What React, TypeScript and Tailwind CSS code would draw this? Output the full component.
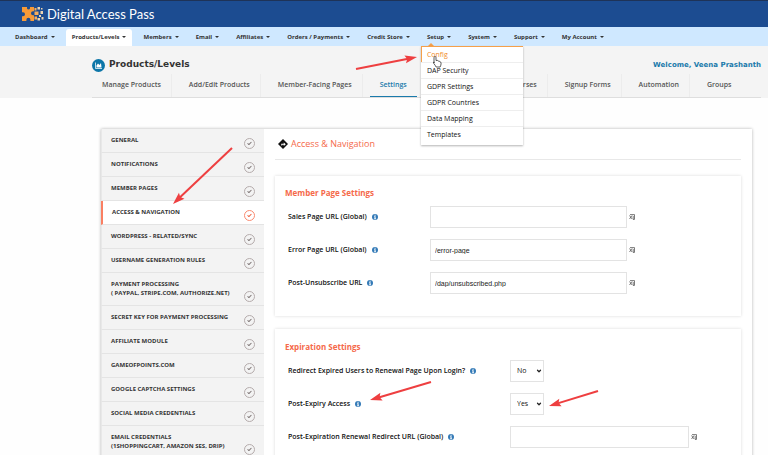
import { useState } from "react";
import { Check, ChevronDown } from "lucide-react";

const navBefore = ["Members", "Email", "Affiliates", "Orders / Payments", "Credit Store"];
const navAfter = ["System", "Support", "My Account"];
const setupItems = ["DAP Security", "GDPR Settings", "GDPR Countries", "Data Mapping", "Templates"];

const sections = [
  ["GENERAL"],
  ["NOTIFICATIONS"],
  ["MEMBER PAGES"],
  ["ACCESS & NAVIGATION"],
  ["WORDPRESS - RELATED/SYNC"],
  ["USERNAME GENERATION RULES"],
  ["PAYMENT PROCESSING", "( PAYPAL, STRIPE.COM, AUTHORIZE.NET)"],
  ["SECRET KEY FOR PAYMENT PROCESSING"],
  ["AFFILIATE MODULE"],
  ["GAMEOFPOINTS.COM"],
  ["GOOGLE CAPTCHA SETTINGS"],
  ["SOCIAL MEDIA CREDENTIALS"],
  ["EMAIL CREDENTIALS", "(1SHOPPINGCART, AMAZON SES, DRIP)"],
];

function Logo() {
  return (
    <svg width="22" height="14" viewBox="0 0 22 14" aria-hidden="true">
      <path
        fill="#f79a38"
        d="M0 0h5v1.5a1.6 1.6 0 0 0 3 0V0h4v4.2h-1a1.8 1.8 0 0 0 0 4H12V14H8.4v-1.2a2 2 0 0 0-4 0V14H0V9.2h1a2 2 0 0 0 0-4H0z"
      />
      <path fill="#f8ad5c" d="M12.500 1h2v2.500h-2zM12.500 4.500h4v3.500h-4zM12.500 9.500h2.500v3h-2.500z" />
      <path
        fill="#ecd3b0"
        d="M15.500 0h2.500v2.500h-2.500zM18.500 4h2.500v3h-2.500zM17 8h2v2H17zM15.500 11h2.500v2.500h-2.500zM19.500 10h2v2.500h-2zM19 1h1.500v1.500H19z"
      />
    </svg>
  );
}

function Caret() {
  return <span className="ml-[3px] inline-block border-x-2 border-t-2 border-x-transparent border-t-[#333] align-middle" />;
}

function NavItem({ label, active = false }: { label: string; active?: boolean }) {
  return (
    <button
      className={
        active
          ? "h-[17px] rounded-t-[3px] bg-white px-[6px] whitespace-nowrap"
          : "h-[17px] px-[6px] whitespace-nowrap"
      }
    >
      {label}
      <Caret />
    </button>
  );
}

function SetupMenu() {
  return (
    <div className="relative">
      <NavItem label="Setup" />
      <span className="absolute bottom-0 left-[7px] border-x-[3px] border-b-[3px] border-x-transparent border-b-[#f5a04a]" />
      <ul className="absolute top-full left-0 z-10 w-[102px] border-t border-[#f5a04a] bg-white pb-[3px] text-[7px] leading-[15px] font-normal text-[#111] shadow-[0_1px_2px_rgba(0,0,0,0.3)]">
        <li className="border-b border-b-[#eee]">
          <a href="#config" className="block border-l border-[#f5a04a] pl-[5px] font-medium text-[#f08a28]">
            Config
          </a>
        </li>
        {setupItems.map((item) => (
          <li key={item} className="border-b border-[#eee] last:border-b-0">
            <a href="#setup" className="block pl-[6px]">
              {item}
            </a>
          </li>
        ))}
      </ul>
    </div>
  );
}

function TabItem({ label }: { label: string }) {
  return (
    <a href="#tab" className="border-r border-[#ececec] px-[10px] whitespace-nowrap last:border-r-0">
      {label}
    </a>
  );
}

function InfoIcon() {
  return (
    <svg width="6" height="6" viewBox="0 0 12 12" className="shrink-0" aria-hidden="true">
      <circle cx="6" cy="6" r="6" fill="#337ab7" />
      <path d="M5 1.500h2.200v2H5zM4.200 4.700h3V9h.8v1.400H4.200V9H5V6h-.8z" fill="#fff" />
    </svg>
  );
}

function ExpandIcon() {
  return (
    <svg width="6" height="6" viewBox="0 0 6 6" className="shrink-0" fill="none" stroke="#444" strokeWidth="0.700" aria-hidden="true">
      <path d="M.5 1.500l2.600 3.500M3.100 1.500L.5 5M1 .6h4.500v4.800H4M4.200 2v3.400" />
    </svg>
  );
}

function SidebarItem({ lines, active, onSelect }: { lines: string[]; active: boolean; onSelect: () => void }) {
  return (
    <button
      onClick={onSelect}
      className={
        active
          ? "flex w-full items-end justify-between border-b border-l-2 border-b-[#e4e4e4] border-l-[#fa7f62] bg-white pr-[9px] pl-[9px] text-left"
          : "flex w-full items-end justify-between border-b border-l border-b-[#e4e4e4] border-l-[#e8e8e8] bg-[#f3f3f3] pr-[9px] pl-[9px] text-left"
      }
    >
      <span className="py-[7px] whitespace-nowrap">
        {lines.map((line) => (
          <span key={line} className="block">
            {line}
          </span>
        ))}
      </span>
      <span
        className={
          active
            ? "mb-[3px] flex size-[11px] shrink-0 items-center justify-center rounded-full border border-[#fa8a70] text-[#f0603f]"
            : "mb-[3px] flex size-[11px] shrink-0 items-center justify-center rounded-full border border-[#b5acac] text-[#7d7474]"
        }
      >
        <Check size={5} strokeWidth={5} />
      </span>
    </button>
  );
}

function FieldLabel({ id, text }: { id: string; text: string }) {
  return (
    <div className="flex items-center gap-[5px]">
      <label htmlFor={id} className="whitespace-nowrap">
        {text}
      </label>
      <InfoIcon />
    </div>
  );
}

function UrlField({ id, label, value = "" }: { id: string; label: string; value?: string }) {
  return (
    <div className="grid h-[22px] grid-cols-[142px_1fr] items-center">
      <FieldLabel id={id} text={label} />
      <div className="flex items-center gap-[2px]">
        <input
          id={id}
          defaultValue={value}
          className="h-[22px] w-full max-w-[197px] border border-[#e3e3e3] bg-white px-1 font-['Liberation_Sans',sans-serif] text-[7px] font-normal text-[#222]"
        />
        <ExpandIcon />
      </div>
    </div>
  );
}

function SelectField({ id, label, value }: { id: string; label: string; value: string }) {
  return (
    <div className="grid h-[22px] grid-cols-[222px_1fr] items-center">
      <FieldLabel id={id} text={label} />
      <div className="relative w-[34px]">
        <select
          id={id}
          defaultValue={value}
          className="block h-[22px] w-full appearance-none border border-[#e3e3e3] bg-white pl-[6px] text-[7px] font-normal text-[#111]"
        >
          <option>Yes</option>
          <option>No</option>
        </select>
        <ChevronDown size={6} strokeWidth={5} className="pointer-events-none absolute top-2 right-[2px] text-[#222]" />
      </div>
    </div>
  );
}

function Arrow({ from, to }: { from: [number, number]; to: [number, number] }) {
  const angle = (Math.atan2(to[1] - from[1], to[0] - from[0]) * 180) / Math.PI;
  const length = Math.hypot(to[0] - from[0], to[1] - from[1]);
  return (
    <g transform={`translate(${from[0]} ${from[1]}) rotate(${angle})`} fill="#ee3f40">
      <path d={`M0-1H${length - 9}V1H0z`} />
      <path d={`M${length} 0L${length - 12}-4L${length - 10} 0L${length - 12} 4z`} />
    </g>
  );
}

export default function App() {
  const [selected, setSelected] = useState(3);

  return (
    <div className="relative h-screen overflow-hidden bg-[#fefefe] font-['Open_Sans',sans-serif]">
      <header className="flex h-[27px] items-center gap-[3px] border-t border-[#1e3358] bg-[#1c4c91] pl-[22px]">
        <Logo />
        <span className="font-['Lato',sans-serif] text-[13px] leading-none text-white">Digital Access Pass</span>
      </header>

      <nav className="flex h-[19px] items-end gap-[5px] bg-[#cfe8ff] pl-[9px] text-[6px] font-bold text-[#333]">
        <NavItem label="Dashboard" />
        <NavItem label="Products/Levels" active />
        {navBefore.map((label) => (
          <NavItem key={label} label={label} />
        ))}
        <SetupMenu />
        {navAfter.map((label) => (
          <NavItem key={label} label={label} />
        ))}
      </nav>

      <div className="bg-[#f4f4f4] pt-[10px] pr-[7px] pl-[92px]">
        <div className="flex h-[18px] items-center justify-between font-['DejaVu_Sans',sans-serif] font-bold">
          <h1 className="flex items-center gap-1 text-[9px] text-[#333]">
            <svg width="13" height="13" viewBox="0 0 26 26" aria-hidden="true">
              <circle cx="13" cy="13" r="13" fill="#0c76a8" />
              <path d="M7 7v12h13" fill="none" stroke="#fff" strokeWidth="1.500" />
              <path d="M9 17v-4l3-4 3 3 3-4 1 9z" fill="#fff" />
            </svg>
            Products/Levels
          </h1>
          <span className="text-[7px] text-[#1a7aab]">Welcome, Veena Prashanth</span>
        </div>
        <div className="flex h-[24px] gap-[7px] border-b border-[#dedede] text-[7px] leading-[22px] font-semibold text-[#555]">
          <TabItem label="Manage Products" />
          <TabItem label="Add/Edit Products" />
          <TabItem label="Member-Facing Pages" />
          <a href="#settings" className="border-b border-[#1a7aab] px-[10px] text-[#1a7aab]">
            Settings
          </a>
          <a href="#courses" className="w-[124px] border-r border-[#ececec] pr-[10px] text-right">
            Courses
          </a>
          <TabItem label="Signup Forms" />
          <TabItem label="Automation" />
          <TabItem label="Groups" />
        </div>
      </div>

      <div className="mt-[31px] mr-4 ml-[101px] flex bg-white shadow-[0_0_3px_rgba(0,0,0,0.3)]">
        <aside className="w-[163px] shrink-0 text-[6px] leading-[9px] font-bold text-[#333]">
          {sections.map((lines, i) => (
            <SidebarItem key={lines[0]} lines={lines} active={i === selected} onSelect={() => setSelected(i)} />
          ))}
        </aside>

        <main className="flex-1 px-[11px]">
          <h2 className="flex h-[31px] items-center gap-[3px] border-b border-[#e8e8e8] pl-[3px] text-[9px] font-medium text-[#f5694a]">
            <svg width="10" height="10" viewBox="0 0 20 20" aria-hidden="true">
              <path d="M10 0l10 10-10 10L0 10z" fill="#111" />
              <path d="M6.500 13V9.500h5V7l4 3.500-4 3.500v-2.500h-3V13z" fill="#fff" />
            </svg>
            Access &amp; Navigation
          </h2>

          <section className="mt-4 h-[140px] pt-[11px] pl-[10px] text-[7px] font-semibold text-[#111] shadow-[0_0_3px_rgba(0,0,0,0.15)]">
            <h3 className="text-[8px] leading-[12px] font-bold text-[#f5694a]">Member Page Settings</h3>
            <div className="mt-[7px] flex flex-col gap-[11px] pl-[3px]">
              <UrlField id="sales" label="Sales Page URL (Global)" />
              <UrlField id="error" label="Error Page URL (Global)" value="/error-page" />
              <UrlField id="unsub" label="Post-Unsubscribe URL" value="/dap/unsubscribed.php" />
            </div>
          </section>

          <section className="mt-[13px] pt-[12px] pb-4 pl-[10px] text-[7px] font-semibold text-[#111] shadow-[0_0_3px_rgba(0,0,0,0.15)]">
            <h3 className="text-[8px] leading-[12px] font-bold text-[#f5694a]">Expiration Settings</h3>
            <div className="mt-[7px] flex flex-col gap-[11px] pl-[3px]">
              <SelectField id="renewal" label="Redirect Expired Users to Renewal Page Upon Login?" value="No" />
              <SelectField id="expiry" label="Post-Expiry Access" value="Yes" />
              <div className="grid h-[22px] grid-cols-[222px_1fr] items-center">
                <FieldLabel id="redirect" text="Post-Expiration Renewal Redirect URL (Global)" />
                <div className="flex items-center gap-[2px]">
                  <input id="redirect" className="h-[22px] w-full max-w-[179px] border border-[#e3e3e3] bg-white px-1" />
                  <ExpandIcon />
                </div>
              </div>
            </div>
          </section>
        </main>
      </div>

      {/* Annotations over the page */}
      <svg width="768" height="455" className="pointer-events-none absolute top-0 left-0 z-20" aria-hidden="true">
        <Arrow from={[356, 69]} to={[417, 57]} />
        <Arrow from={[232, 148]} to={[173, 204]} />
        <Arrow from={[431, 382]} to={[370, 400]} />
        <Arrow from={[598, 391]} to={[549, 406]} />
        <path
          d="M434 63v-5.500q0-1 1-1t1 1v3q2-.6 2.200.6 1.600-.3 1.700.8 1.300 0 1.200 1.300 0 2-1 3.800h-4q-.6-1.500-2.500-3.800-.5-1.200.5-1.200z"
          fill="#fff"
          stroke="#333"
          strokeWidth="0.800"
        />
      </svg>
    </div>
  );
}
